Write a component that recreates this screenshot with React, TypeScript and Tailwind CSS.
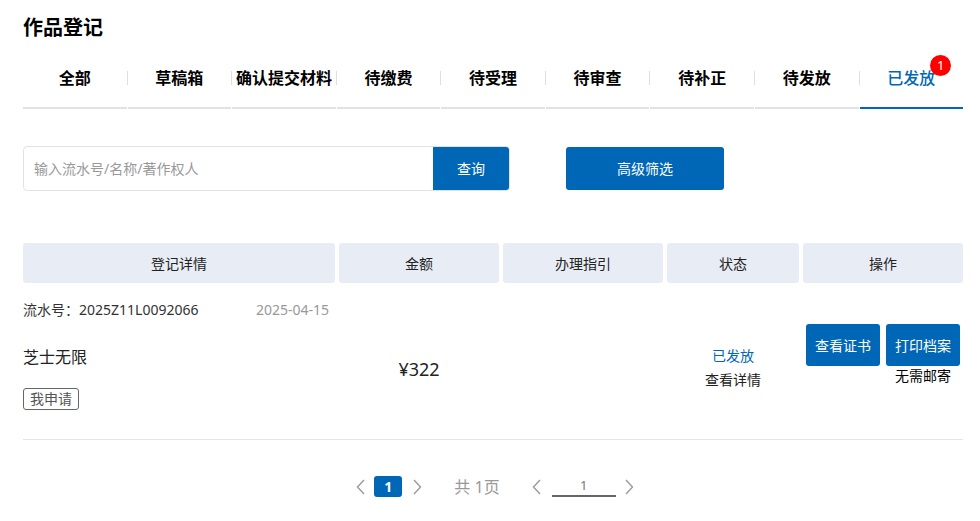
import React from "react";

const BLUE = "bg-[#0067b6]";

const tabs = ["全部", "草稿箱", "确认提交材料", "待缴费", "待受理", "待审查", "待补正", "待发放", "已发放"];

function Chevron({ dir }: { dir: "left" | "right" }) {
  return (
    <svg width="9" height="16" viewBox="0 0 9 16" fill="none" className="shrink-0">
      <polyline
        points={dir === "left" ? "8,1 1.5,8 8,15" : "1,1 7.5,8 1,15"}
        stroke="#9a9a9a"
        strokeWidth="1.4"
        strokeLinejoin="miter"
      />
    </svg>
  );
}

export default function App() {
  return (
    <div className="min-h-screen bg-white pl-[23px] font-['Noto_Sans','Noto_Sans_CJK_SC',sans-serif] text-[#222]">
      <div className="w-[940px]">
        <h1 className="pt-[16px] text-[20px] font-bold leading-[24px] text-black">作品登记</h1>

        {/* tabs */}
        <div className="mt-[22px] flex gap-px">
          {tabs.map((t, i) => {
            const active = i === tabs.length - 1;
            return (
              <div
                key={t}
                className={`relative flex flex-1 justify-center border-b-2 pb-[13px] ${
                  active ? "border-[#0067b6]" : "border-[#dfe3e8]"
                }`}
              >
                <span
                  className={`relative text-[16px] leading-[32px] ${
                    active ? "font-medium text-[#0067b6]" : "font-bold text-black"
                  }`}
                >
                  {t}
                  {active && (
                    <span className="absolute right-[-16px] top-[-7px] flex h-[21px] w-[21px] items-center justify-center rounded-full bg-[#f00] text-[13px] font-normal leading-none text-white">
                      1
                    </span>
                  )}
                </span>
                {!active && (
                  <span className="absolute right-[-1px] top-[9px] h-[14px] w-px bg-[#dcdfe6]" />
                )}
              </div>
            );
          })}
        </div>

        {/* search */}
        <div className="mt-[37px] flex items-center">
          <div className="flex h-[45px] w-[487px] overflow-hidden rounded-[4px] border border-[#dfe3e8]">
            <div className="flex flex-1 items-center pl-[10px] text-[14px] text-[#999]">
              输入流水号/名称/著作权人
            </div>
            <button className={`w-[76px] ${BLUE} text-[14px] text-white`}>查询</button>
          </div>
          <button className={`ml-[56px] h-[43px] w-[158px] rounded-[3px] ${BLUE} text-[14px] text-white`}>
            高级筛选
          </button>
        </div>

        {/* table header */}
        <div className="mt-[52px] grid grid-cols-[312px_160px_160px_132px_160px] gap-[4px]">
          {["登记详情", "金额", "办理指引", "状态", "操作"].map((h) => (
            <div
              key={h}
              className="flex h-[40px] items-center justify-center rounded-[3px] bg-[#e8edf5] text-[14px] text-[#222]"
            >
              {h}
            </div>
          ))}
        </div>

        {/* row */}
        <div className="border-b border-[#e5e5e5]">
          <div className="flex pt-[17px] text-[14px] leading-[20px]">
            <span className="w-[233px] text-[#333]">流水号：2025Z11L0092066</span>
            <span className="text-[#999]">2025-04-15</span>
          </div>
          <div className="grid grid-cols-[312px_160px_160px_132px_160px] gap-[4px]">
            <div className="pb-[29px] pt-[25px]">
              <div className="text-[16px] leading-[24px] text-[#222]">芝士无限</div>
              <span className="mt-[19px] inline-block rounded-[3px] border border-[#666] px-[6px] text-[14px] leading-[20px] text-[#555]">
                我申请
              </span>
            </div>
            <div className="pt-[36px] text-center text-[18px] leading-[26px] text-[#222]">¥322</div>
            <div />
            <div className="pt-[24px] text-center text-[14px] leading-[24px]">
              <div className="text-[#0067b6]">已发放</div>
              <div className="text-[#222]">查看详情</div>
            </div>
            <div className="flex justify-center gap-[6px] pt-[4px]">
              <button className={`h-[42px] w-[74px] rounded-[3px] ${BLUE} text-[14px] text-white`}>查看证书</button>
              <div className="flex flex-col items-center">
                <button className={`h-[42px] w-[74px] rounded-[3px] ${BLUE} text-[14px] text-white`}>打印档案</button>
                <span className="text-[14px] leading-[20px] text-black">无需邮寄</span>
              </div>
            </div>
          </div>
        </div>

        {/* pagination */}
        <div className="mt-[36px] flex h-[21px] items-center justify-center pl-[4px]">
          <Chevron dir="left" />
          <span className={`ml-[9px] flex h-[21px] w-[28px] items-center justify-center rounded-[3px] ${BLUE} text-[14px] font-bold text-white`}>
            1
          </span>
          <span className="ml-[11px]">
            <Chevron dir="right" />
          </span>
          <span className="ml-[32px] text-[16px] text-[#999]">共 1页</span>
          <span className="ml-[32px]">
            <Chevron dir="left" />
          </span>
          <span className="ml-[11px] flex h-[21px] w-[64px] items-center justify-center border-b-2 border-[#666] text-[13px] text-[#777]">
            1
          </span>
          <span className="ml-[9px]">
            <Chevron dir="right" />
          </span>
        </div>
      </div>
    </div>
  );
}
